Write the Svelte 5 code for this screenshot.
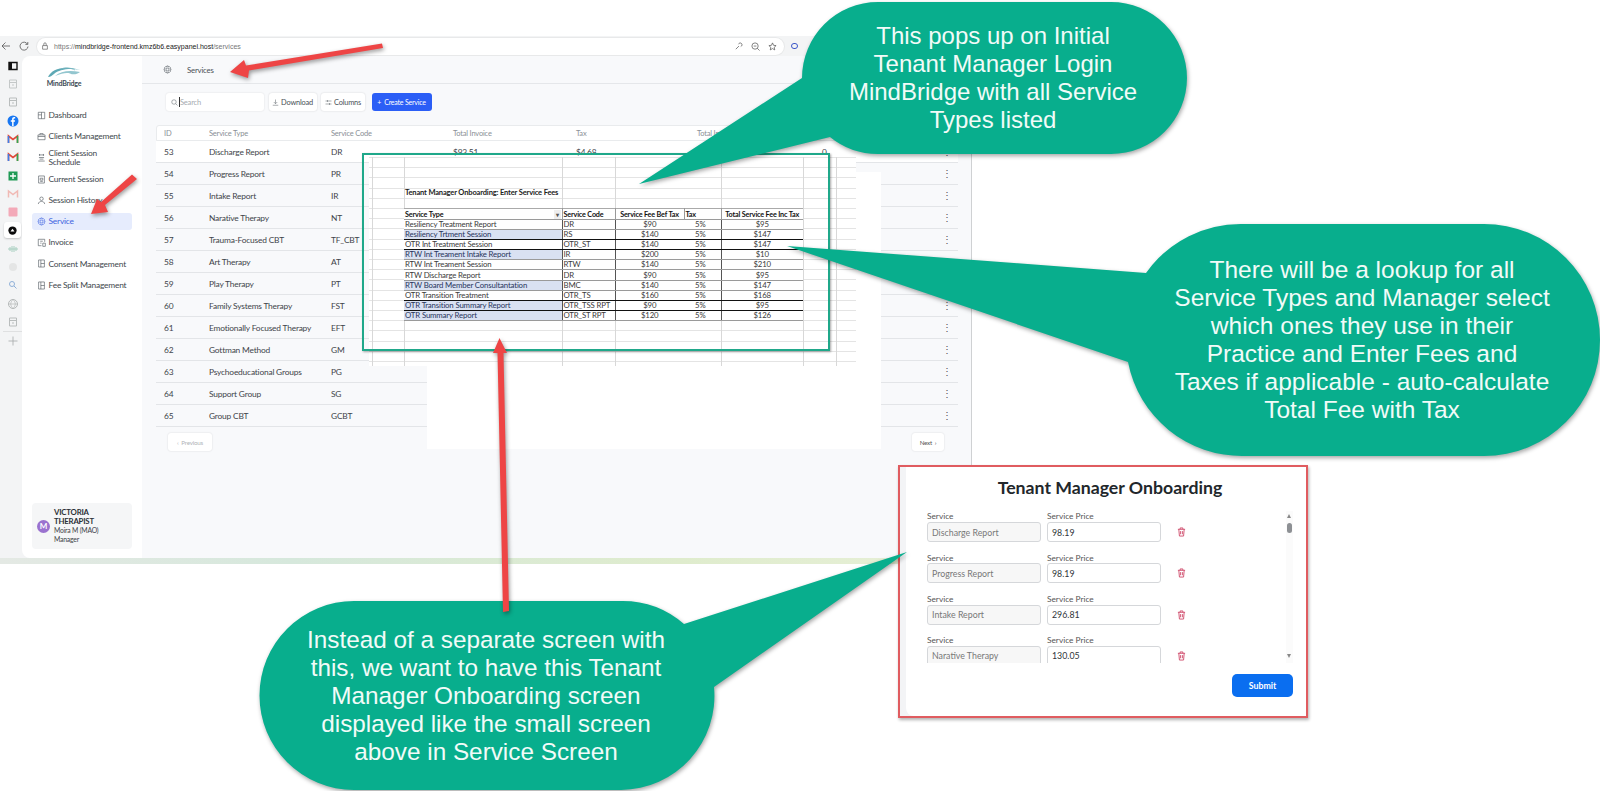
<script>
  const navItems = [
    { label: "Dashboard", icon: "dash" },
    { label: "Clients Management", icon: "case" },
    { label: "Client Session Schedule", icon: "cal" },
    { label: "Current Session", icon: "doc" },
    { label: "Session History", icon: "user" },
    { label: "Service", icon: "gear", active: true },
    { label: "Invoice", icon: "inv" },
    { label: "Consent Management", icon: "book" },
    { label: "Fee Split Management", icon: "book" }
  ];

  const services = [
    [53, "Discharge Report", "DR"],
    [54, "Progress Report", "PR"],
    [55, "Intake Report", "IR"],
    [56, "Narative Therapy", "NT"],
    [57, "Trauma-Focused CBT", "TF_CBT"],
    [58, "Art Therapy", "AT"],
    [59, "Play Therapy", "PT"],
    [60, "Family Systems Therapy", "FST"],
    [61, "Emotionally Focused Therapy", "EFT"],
    [62, "Gottman Method", "GM"],
    [63, "Psychoeducational Groups", "PG"],
    [64, "Support Group", "SG"],
    [65, "Group CBT", "GCBT"]
  ];

  const fees = [
    ["Resiliency Treatment Report", "DR", "$90", "$95", false, false],
    ["Resiliency Trtment Session", "RS", "$140", "$147", true, true],
    ["OTR Int Treatment Session", "OTR_ST", "$140", "$147", false, true],
    ["RTW Int Treament Intake Report", "IR", "$200", "$10", true, false],
    ["RTW Int Treament Session", "RTW", "$140", "$210", false, false],
    ["RTW Discharge Report", "DR", "$90", "$95", false, false],
    ["RTW Board Member Consultantation", "BMC", "$140", "$147", true, false],
    ["OTR Transition Treatment", "OTR_TS", "$160", "$168", false, true],
    ["OTR Transition Summary Report", "OTR_TSS RPT", "$90", "$95", true, true],
    ["OTR Summary Report", "OTR_ST RPT", "$120", "$126", true, false]
  ];

  const prices = [
    ["Discharge Report", "98.19"],
    ["Progress Report", "98.19"],
    ["Intake Report", "296.81"],
    ["Narative Therapy", "130.05"]
  ];

  const gridCols = [3, 35, 193, 246, 352, 434, 467];

  const icons = {
    dash: "M2 2h10v10H2zM7 2v10M2 6h5",
    case: "M1.5 4.5h11v7.5h-11zM4.5 4.5V2.5h5v2M1.5 7h11",
    cal: "M3 3h8M4 1.5v3M10 1.5v3M3 7h8M2 12.5h10M4 9.5h6",
    doc: "M2.5 1.5h9v11h-9zM5 5h4v3H5zM5 10h4",
    user: "M7 7a2.7 2.7 0 1 0 0-5.4A2.7 2.7 0 0 0 7 7zM2 12.5c.5-3 2.5-4 5-4s4.500 1 5 4",
    gear: "M7 4.800a2.200 2.200 0 1 0 0 4.400 2.200 2.200 0 0 0 0-4.400zM6 1.500h2l.4 1.700 1.600-.7 1.400 1.400-.8 1.500 1.700.6v2l-1.700.5.8 1.600-1.400 1.400-1.600-.8-.4 1.800H6l-.5-1.800-1.500.8-1.400-1.400.8-1.600-1.700-.5v-2l1.700-.6-.8-1.500L4 2.500l1.500.7z",
    inv: "M2 2h10v4M2 2v10h5M9 8h4v5H9zM5 5h4M5 8h2",
    book: "M2.500 1.500h9v11h-9zM6 1.500v11M6 7h5.500"
  };
</script>

{#snippet icon(name, size = 9)}
  <svg class="ico" viewBox="0 0 14 14" width={size} height={size}><path d={icons[name]} /></svg>
{/snippet}

<div class="page">
  <div class="shot">
    <div class="addr">
      <svg class="chrome-ico" width="10" height="10" viewBox="0 0 10 10"><path d="M9 5H1M4.500 1.500 1 5l3.500 3.500" /></svg>
      <svg class="chrome-ico reload" width="10" height="10" viewBox="0 0 10 10"><path d="M8.500 3.200A4 4 0 1 0 9 5.500M8.800 1v2.400H6.400" /></svg>
      <div class="pill">
        <svg class="chrome-ico lock" width="8" height="8" viewBox="0 0 10 10"><path d="M2 4.500h6v4.500H2zM3.500 4.500V2.500a1.500 1.500 0 0 1 3 0v2" /></svg>
        <span class="url">https://<b>mindbridge-frontend.kmz6b6.easypanel.host</b>/services</span>
        <svg class="chrome-ico end" width="9" height="9" viewBox="0 0 10 10"><path d="M2 8l3.500-3.500M5 2.500a2 2 0 1 1 2.500 2.500" /></svg>
        <svg class="chrome-ico" width="9" height="9" viewBox="0 0 10 10"><path d="M4.500 1a3.500 3.500 0 1 0 0 7 3.500 3.500 0 0 0 0-7zM7 7l2.500 2.500M3 4.500h3" /></svg>
        <svg class="chrome-ico" width="9" height="9" viewBox="0 0 10 10"><path d="M5 1l1.200 2.700 2.800.3-2.100 1.900.6 2.900L5 7.300 2.500 8.800l.6-2.900L1 4l2.800-.3z" /></svg>
      </div>
      <span class="ring"></span>
    </div>

    <div class="app">
      <aside class="rail">
        <svg class="r" viewBox="0 0 12 12"><path d="M2 2.500h8v7H2z" fill="none" stroke="#111" stroke-width="1.400" /><path d="M2 2.500h3v7H2z" fill="#111" /></svg>
        <svg class="r" viewBox="0 0 12 12"><path d="M2.500 2h7v8h-7zM2.500 4.500h7M5 7h2" fill="none" stroke="#c4c8c8" /></svg>
        <svg class="r" viewBox="0 0 12 12"><path d="M2.500 2h7v8h-7zM2.500 4.500h7M5 7h2" fill="none" stroke="#b9bdbd" /></svg>
        <svg class="r" viewBox="0 0 12 12"><circle cx="6" cy="6" r="5.500" fill="#1877f2" /><path d="M6.600 11V6.800h1.300l.2-1.500H6.600v-1c0-.5.200-.8.800-.8h.8V2.200c-.3 0-.7-.1-1.100-.1-1.200 0-2 .7-2 2v1.200H3.800v1.500h1.300V11z" fill="#fff" /></svg>
        <svg class="r" viewBox="0 0 12 12"><path d="M1.500 10V3l4.500 3.500L10.500 3v7" fill="none" stroke="#e2483a" stroke-width="1.600" /><path d="M1.500 10V3" stroke="#3f7fe8" stroke-width="1.600" /><path d="M10.500 10V3" stroke="#2fa952" stroke-width="1.600" /></svg>
        <svg class="r" viewBox="0 0 12 12"><path d="M1.500 10V3l4.500 3.500L10.500 3v7" fill="none" stroke="#e2483a" stroke-width="1.600" /><path d="M1.500 10V3" stroke="#3f7fe8" stroke-width="1.600" /><path d="M10.500 10V3" stroke="#2fa952" stroke-width="1.600" /></svg>
        <svg class="r" viewBox="0 0 12 12"><rect x="1.500" y="1.500" width="9" height="9" fill="#1f9a55" /><path d="M6 3v6M3 6h6" stroke="#fff" stroke-width="1.300" /></svg>
        <svg class="r" viewBox="0 0 12 12"><path d="M1.500 9.500V3l4.500 3.500L10.500 3v6.500" fill="none" stroke="#f0b9b4" stroke-width="1.500" /></svg>
        <svg class="r" viewBox="0 0 12 12"><rect x="1.500" y="1.500" width="9" height="9" rx="1" fill="#f3a9b8" /></svg>
        <span class="r-on"><svg viewBox="0 0 12 12" width="11" height="11"><circle cx="6" cy="6" r="4.500" fill="#0c0c0c" /><path d="M3.800 7 6 4.200 8.200 7z" fill="#fff" /></svg></span>
        <svg class="r" viewBox="0 0 12 12"><path d="M1 6h10M3 4v4M5 3v6M7 3v6M9 4v4" stroke="#a8cfc0" /></svg>
        <svg class="r" viewBox="0 0 12 12"><circle cx="6" cy="6" r="4" fill="#e4e5e5" /></svg>
        <svg class="r" viewBox="0 0 12 12"><path d="M5 2.500a2.500 2.500 0 1 0 0 5 2.500 2.500 0 0 0 0-5zM7 7l2.500 2.500" fill="none" stroke="#8fb0d8" /></svg>
        <svg class="r" viewBox="0 0 12 12"><circle cx="6" cy="6" r="4.500" fill="none" stroke="#b4b8b8" /><path d="M1.500 6h9M6 1.500c-3 3-3 6 0 9M6 1.500c3 3 3 6 0 9" fill="none" stroke="#b4b8b8" stroke-width=".7" /></svg>
        <svg class="r" viewBox="0 0 12 12"><path d="M2.500 2h7v8h-7zM2.500 4.500h7M5 7h2" fill="none" stroke="#b9bdbd" /></svg>
        <span class="r-sep"></span>
        <svg class="r plus" viewBox="0 0 12 12"><path d="M6 1.500v9M1.500 6h9" fill="none" stroke="#a5a9a9" stroke-width=".8" /></svg>
      </aside>

      <aside class="side">
        <div class="logo">
          <svg width="34" height="12" viewBox="0 0 34 12">
            <path d="M1 11C5 3 16-1 33 4 24 2 12 3 7 8c-2 1.500-3 3-6 3z" fill="#5ea9b5" />
            <path d="M8 10c6-5 14-6 25-4-3 2.500-7 3-10 1.500-4-1-8 0-15 2.500z" fill="#93c6cf" />
            <path d="M14 3c5-2 10-1 14 1" fill="none" stroke="#7db9c3" stroke-width=".8" />
          </svg>
          <span>MindBridge</span>
        </div>
        <nav>
          {#each navItems as item}
            <div class="nav-item" class:active={item.active}>
              {@render icon(item.icon)}
              <span class="nav-label">{item.label}</span>
            </div>
          {/each}
        </nav>
        <div class="user">
          <span class="avatar">M</span>
          <div class="who">
            <strong>VICTORIA THERAPIST</strong>
            <small>Moira M (MAO)</small>
            <small>Manager</small>
          </div>
        </div>
      </aside>

      <main>
        <header class="top">
          {@render icon("gear")}
          <span>Services</span>
        </header>
        <div class="tools">
          <div class="search">
            <svg class="ico" width="7" height="7" viewBox="0 0 14 14"><path d="M6 1.500a4.500 4.500 0 1 0 0 9 4.500 4.500 0 0 0 0-9zM9.500 9.500 13 13" /></svg>
            <i></i>Search
          </div>
          <button class="btn dl">
            <svg class="ico" width="7" height="7" viewBox="0 0 14 14"><path d="M7 1v8M3.500 6 7 9.500 10.500 6M1.500 12.500h11" /></svg>
            Download
          </button>
          <button class="btn col">
            <svg class="ico" width="7" height="7" viewBox="0 0 14 14"><path d="M1 4h12M1 10h12M5 2v4M9 8v4" /></svg>
            Columns
          </button>
          <button class="btn create">+&nbsp; Create Service</button>
        </div>
        <section class="table">
          <div class="row head">
            <span>ID</span><span>Service Type</span><span>Service Code</span><span>Total Invoice</span><span>Tax</span><span>Total Income</span><span>(A</span><span></span>
          </div>
          {#each services as s, n}
            <div class="row" class:first={n === 0}>
              <span>{s[0]}</span><span>{s[1]}</span><span>{s[2]}</span>
              <span>{n === 0 ? "$93.51" : ""}</span><span>{n === 0 ? "$4.68" : ""}</span><span></span>
              <span>{n === 0 ? "0" : ""}</span>
              <span class="dots">⋮</span>
            </div>
          {/each}
        </section>
        <div class="pager">
          <button class="btn pg prev">‹&nbsp; Previous</button>
          <button class="btn pg next">Next &nbsp;›</button>
        </div>
      </main>
    </div>
    <div class="strip"></div>
  </div>

  <div class="white-block"></div>
  <div class="sheet">
    {#each gridCols as c}
      <span class="vline" style="left:{c}px"></span>
    {/each}
    <div class="sheet-title">Tenant Manager Onboarding: Enter Service Fees</div>
    <table>
      <colgroup><col class="c1" /><col class="c2" /><col class="c3" /><col class="c4" /><col class="c5" /></colgroup>
      <thead>
        <tr><th class="l">Service Type <em>▾</em></th><th class="l">Service Code</th><th>Service Fee Bef Tax</th><th class="l">Tax</th><th>Total Service Fee Inc Tax</th></tr>
      </thead>
      <tbody>
        {#each fees as f}
          <tr class:dark={f[5]}>
            <td class="l" class:blue={f[4]}>{f[0]}</td>
            <td class="l">{f[1]}</td>
            <td class="open">{f[2]}</td>
            <td class="tax">5%</td>
            <td class="open">{f[3]}</td>
          </tr>
        {/each}
      </tbody>
    </table>
  </div>
  <div class="teal-box"></div>

  <section class="onboard">
    <div class="card">
      <h2>Tenant Manager Onboarding</h2>
      <div class="list">
        {#each prices as p}
          <div class="field">
            <div class="labels"><span>Service</span><span>Service Price</span></div>
            <div class="inputs">
              <div class="input off">{p[0]}</div>
              <div class="input">{p[1]}</div>
              <svg class="trash" width="9" height="10" viewBox="0 0 10 11"><path d="M1 2.500h8M3.500 2.500V1h3v1.500M2 2.500l.7 7.500h4.600L8 2.500M4 4.500v3.500M6 4.500v3.500" /></svg>
            </div>
          </div>
        {/each}
        <div class="scrollbar">
          <span class="up"></span>
          <span class="thumb"></span>
          <span class="down"></span>
        </div>
      </div>
      <div class="foot"><button class="submit">Submit</button></div>
    </div>
  </section>

  <svg class="marks" width="1600" height="791" viewBox="0 0 1600 791">
    <g class="bubble">
      <path d="M878 2H1111A76 76 0 0 1 1111 154H878A76 76 0 0 1 830 137L639 184 802 78A76 76 0 0 1 878 2Z" />
      <path d="M1244 224H1484A116 116 0 0 1 1484 456H1244A116 116 0 0 1 1128 362L787 246 1146 273A116 116 0 0 1 1244 224Z" />
      <path d="M354 601H621A94 94 0 0 1 684 624L907 552 714 687A94 94 0 0 1 621 790H354A94 94 0 0 1 354 601Z" />
    </g>
    <g class="arrow">
      <path d="M382 43.500 383 48 249 70.500 248 78 230 72 244 60 246 65.500Z" />
      <path d="M132 174.500 137 179 105 205 108 212 91 214 97 199 101 202Z" />
      <path d="M499.500 338 507 353 503.500 353 509 611 503 612 497.500 353 493 353Z" />
    </g>
  </svg>

  <div class="say say1">This pops up on Initial<br />Tenant Manager Login<br />MindBridge with all Service<br />Types listed</div>
  <div class="say say2">There will be a lookup for all<br />Service Types and Manager select<br />which ones they use in their<br />Practice and Enter Fees and<br />Taxes if applicable - auto-calculate<br />Total Fee with Tax</div>
  <div class="say say3">Instead of a separate screen with<br />this, we want to have this Tenant<br />Manager Onboarding screen<br />displayed like the small screen<br />above in Service Screen</div>
</div>

<style>
  :global(body) {
    margin: 0;
    background: #fff;
  }
  .page {
    position: relative;
    width: 1600px;
    height: 791px;
    overflow: hidden;
    background: #fff;
    font-family: "Lato", "Liberation Sans", sans-serif;
    color: #3c4248;
  }
  .shot {
    width: 972px;
    padding-top: 36px;
  }
  .addr {
    height: 20px;
    background: #f3f4f5;
    display: flex;
    align-items: center;
    padding-left: 1px;
  }
  .chrome-ico {
    fill: none;
    stroke: #555;
    stroke-width: 0.8;
    flex: none;
  }
  .reload {
    margin-left: 8px;
  }
  .pill {
    margin-left: 8px;
    width: 747px;
    height: 17px;
    background: #fff;
    border-radius: 9px;
    box-shadow: 0 0 0 1px #e8e9ea;
    display: flex;
    align-items: center;
    gap: 8px;
    padding: 0 7px 0 4px;
    box-sizing: border-box;
  }
  .lock {
    margin-right: -3px;
  }
  .url {
    font-family: "Liberation Sans", sans-serif;
    font-size: 7px;
    color: #777;
    white-space: nowrap;
  }
  .url b {
    font-weight: 400;
    color: #222;
  }
  .end {
    margin-left: auto;
  }
  .ring {
    width: 5px;
    height: 4px;
    border: 1.5px solid #3a55c8;
    border-radius: 3px;
    margin-left: 7px;
  }
  .app {
    display: flex;
    height: 502px;
    background: #f3f4f5;
  }
  .rail {
    width: 22px;
    flex: none;
    display: flex;
    flex-direction: column;
    align-items: center;
    padding-top: 0.5px;
  }
  .r {
    width: 12px;
    height: 12px;
    flex: none;
    margin: 3.165px 0;
    margin-left: 3px;
  }
  .r-on {
    width: 17px;
    height: 16px;
    margin: 1.165px 0 1.165px 3px;
    background: #fff;
    border-radius: 3px;
    box-shadow: 0 1px 2px rgba(0, 0, 0, 0.2);
    display: flex;
    align-items: center;
    justify-content: center;
    flex: none;
  }
  .r-sep {
    width: 20px;
    height: 1px;
    background: #dfe0e1;
    margin: 0 0 0 3px;
  }
  .plus {
    margin-top: 3px;
  }
  .side {
    width: 120px;
    flex: none;
    background: #fff;
    border-radius: 8px 0 0 8px;
    display: flex;
    flex-direction: column;
    padding: 0 10px 9px;
    box-sizing: border-box;
    letter-spacing: -0.2px;
  }
  .logo {
    height: 51px;
    display: flex;
    flex-direction: column;
    align-items: center;
    width: 46px;
    margin-left: 9px;
    padding-top: 10px;
    box-sizing: border-box;
  }
  .logo span {
    font-size: 7px;
    font-weight: 700;
    color: #3c4a55;
    margin-top: 1px;
  }
  nav {
    display: flex;
    flex-direction: column;
    gap: 4.200px;
  }
  .nav-item {
    height: 17px;
    display: flex;
    align-items: center;
    gap: 2.500px;
    padding-left: 5px;
    font-size: 8.400px;
    line-height: 8.400px;
    border-radius: 3px;
    color: #41474d;
  }
  .nav-label {
    max-width: 80px;
  }
  .nav-item.active {
    background: #e6ecfd;
    color: #3d63e0;
  }
  .nav-item.active :global(.ico) {
    stroke: #3d63e0;
  }
  .ico {
    fill: none;
    stroke: #555c62;
    stroke-width: 1;
    flex: none;
  }
  .user {
    margin-top: auto;
    height: 46px;
    background: #f5f6f7;
    border-radius: 4px;
    display: flex;
    align-items: center;
    gap: 4px;
    padding-left: 5px;
  }
  .who {
    width: 66px;
  }
  .avatar {
    width: 13px;
    height: 13px;
    border-radius: 50%;
    background: #9a72cf;
    color: #fff;
    font-size: 8px;
    font-weight: 700;
    display: flex;
    align-items: center;
    justify-content: center;
    flex: none;
  }
  .user strong {
    display: block;
    width: 50px;
    font-size: 7.800px;
    line-height: 9.200px;
    font-weight: 700;
    color: #2c3136;
  }
  .user small {
    display: block;
    font-size: 6.800px;
    line-height: 9.200px;
  }
  main {
    flex: 1;
    background: #f8f9fb;
    border-right: 1px solid #cfd1d3;
    min-width: 0;
    letter-spacing: -0.2px;
  }
  .top {
    height: 27px;
    border-bottom: 1px solid #e5e7ea;
    display: flex;
    align-items: center;
    gap: 15px;
    padding-left: 21px;
    font-size: 7.800px;
    color: #4a5056;
  }
  .tools {
    display: flex;
    gap: 4.500px;
    padding: 9px 0 0 24px;
    height: 18px;
  }
  .search {
    width: 98px;
    box-sizing: border-box;
    background: #fff;
    border-radius: 3px;
    box-shadow: 0 0 2px rgba(0, 0, 0, 0.12);
    display: flex;
    align-items: center;
    padding-left: 5px;
    font-size: 7.500px;
    color: #a6abb0;
  }
  .search i {
    width: 1px;
    height: 10px;
    background: #333;
    margin: 0 0 0 1px;
  }
  .btn {
    font-family: inherit;
    letter-spacing: inherit;
    border: 0;
    background: #fff;
    border-radius: 3px;
    box-shadow: 0 0 2px rgba(0, 0, 0, 0.16);
    font-size: 7.400px;
    color: #4a5056;
    padding: 0;
    height: 18px;
    display: flex;
    align-items: center;
    justify-content: center;
    gap: 2px;
  }
  .dl {
    width: 48px;
  }
  .col {
    width: 44px;
  }
  .create {
    width: 60px;
    margin-left: 2px;
    background: #2b5ef6;
    color: #fff;
    box-shadow: none;
    font-size: 7px;
  }
  .table {
    margin: 14px 13px 0 14px;
  }
  .row {
    display: grid;
    grid-template-columns: 45px 122px 122px 123px 121px 125px 120px 16px;
    padding-left: 8px;
    height: 22px;
    align-items: center;
    border-bottom: 1px solid #e3e5e8;
    box-sizing: border-box;
    font-size: 8.400px;
    color: #3e444a;
    white-space: nowrap;
  }
  .head {
    height: 16px;
    background: #fff;
    border: 1px solid #e9ebed;
    border-radius: 3px 3px 0 0;
    padding-left: 7px;
    font-size: 7.500px;
    color: #8a9096;
  }
  .first {
    background: #fff;
  }
  .dots {
    font-size: 10px;
    font-family: "Liberation Sans", sans-serif;
    color: #555;
  }
  .pager {
    display: flex;
    justify-content: space-between;
    margin: 6px 27px 0 26px;
  }
  .pg {
    height: 18px;
    font-size: 6.200px;
    box-shadow: 0 0 2px rgba(0, 0, 0, 0.14);
  }
  .prev {
    width: 44px;
    color: #b0b4b8;
  }
  .next {
    width: 32px;
    color: #555;
  }
  .strip {
    height: 6px;
    background: linear-gradient(90deg, #e4e9e4, #d6e8dc 30%, #dfeccd 70%, #e8f0d8);
  }
  .white-block {
    position: absolute;
    left: 427px;
    top: 172px;
    width: 454px;
    height: 277px;
    background: #fff;
  }
  .sheet {
    position: absolute;
    left: 369px;
    top: 157px;
    width: 487px;
    height: 209px;
    background-color: #fff;
    background-image: repeating-linear-gradient(#e4e4e4 0 1px, transparent 1px 10.200px);
  }
  .vline {
    position: absolute;
    top: 0;
    bottom: 0;
    width: 1px;
    background: #d8d8d8;
  }
  .sheet-title {
    position: absolute;
    left: 36px;
    top: 31px;
    font-size: 7.500px;
    line-height: 10px;
    letter-spacing: -0.15px;
    font-weight: 700;
    color: #222;
    white-space: nowrap;
  }
  table {
    position: absolute;
    left: 35px;
    top: 51px;
    width: 399px;
    border-collapse: collapse;
    table-layout: fixed;
    background: #fff;
    font-size: 7.800px;
    letter-spacing: -0.15px;
    color: #3a3a3a;
  }
  .c1 { width: 158px; }
  .c2 { width: 53px; }
  .c3 { width: 69px; }
  .c4 { width: 37px; }
  .c5 { width: 82px; }
  th, td {
    height: 10.100px;
    padding: 0 1px;
    line-height: 9px;
    font-weight: 400;
    text-align: center;
    white-space: nowrap;
    box-sizing: border-box;
    border-bottom: 1px solid #9a9a9a;
    border-right: 1px solid #555;
  }
  th {
    height: 11px;
    font-weight: 700;
    font-size: 7.200px;
    color: #111;
    border-top: 1px solid #aaa;
    border-right: 1px solid #999;
  }
  th:last-child, td:last-child {
    border-right: 0;
  }
  th em {
    float: right;
    font-style: normal;
    font-size: 6px;
    color: #555;
    background: #eee;
    padding: 0 2px;
  }
  .l {
    text-align: left;
  }
  td.open {
    border-right: 0;
  }
  td.tax {
    text-align: right;
    padding-right: 15px;
  }
  tr.dark td {
    border-bottom-color: #111;
  }
  .blue {
    background: #d9e1f2;
    color: #27345c;
  }
  .teal-box {
    position: absolute;
    left: 362px;
    top: 152.500px;
    width: 468px;
    height: 198px;
    box-sizing: border-box;
    border: 2.500px solid #1fa88a;
    box-shadow: 1px 1px 2px rgba(0, 0, 0, 0.35);
  }
  .onboard {
    position: absolute;
    left: 898px;
    top: 465px;
    width: 410px;
    height: 253px;
    box-sizing: border-box;
    border: 2px solid #e05c60;
    box-shadow: 1px 2px 3px rgba(0, 0, 0, 0.3);
    background: #f3f4f6;
    padding-left: 6px;
  }
  .card {
    background: #fff;
    height: 100%;
    border-radius: 0 0 0 8px;
    padding: 10px 13px 0 21px;
    box-sizing: border-box;
    font-family: "Lato", "Liberation Sans", sans-serif;
  }
  h2 {
    margin: 0 0 12px;
    text-align: center;
    font-size: 17.700px;
    line-height: 22px;
    font-weight: 700;
    color: #22272b;
  }
  .list {
    position: relative;
    height: 152px;
    overflow: hidden;
  }
  .field {
    height: 41.300px;
  }
  .labels, .inputs {
    display: flex;
    align-items: center;
    gap: 6px;
  }
  .labels {
    height: 11px;
    font-size: 8.300px;
    line-height: 8.300px;
    color: #555;
  }
  .labels span {
    width: 114px;
  }
  .input {
    width: 114px;
    height: 20px;
    box-sizing: border-box;
    border: 1px solid #d5d7da;
    border-radius: 3px;
    background: #fff;
    font-size: 8.800px;
    display: flex;
    align-items: center;
    padding-left: 4px;
    color: #30353a;
  }
  .off {
    background: #f7f7f7;
    color: #777;
  }
  .trash {
    fill: none;
    stroke: #cf4a6a;
    stroke-width: 1;
    margin-left: 10px;
  }
  .scrollbar {
    position: absolute;
    right: 0;
    top: 0;
    bottom: 0;
    width: 7px;
    background: #fbfbfb;
  }
  .scrollbar span {
    position: absolute;
    left: 1px;
  }
  .thumb {
    top: 12px;
    width: 5px;
    height: 10px;
    border-radius: 3px;
    background: #8d9094;
  }
  .up, .down {
    width: 0;
    height: 0;
    border-left: 2.500px solid transparent;
    border-right: 2.500px solid transparent;
  }
  .up {
    top: 3px;
    border-bottom: 4px solid #888;
  }
  .down {
    bottom: 5px;
    border-top: 4px solid #888;
  }
  .foot {
    display: flex;
    justify-content: flex-end;
    margin-top: 11px;
  }
  .submit {
    width: 61px;
    height: 23px;
    border: 0;
    border-radius: 5px;
    background: #0a6ef0;
    color: #fff;
    font-family: inherit;
    font-weight: 700;
    font-size: 8.800px;
  }
  .marks {
    position: absolute;
    left: 0;
    top: 0;
    pointer-events: none;
  }
  .bubble path {
    fill: #08ae8d;
    filter: drop-shadow(1px 2px 2px rgba(0, 0, 0, 0.35));
  }
  .arrow path {
    fill: #ee4545;
    filter: drop-shadow(1px 2px 2px rgba(0, 0, 0, 0.4));
  }
  .say {
    position: absolute;
    font-family: "Liberation Sans", Arial, sans-serif;
    font-size: 24px;
    line-height: 28px;
    text-align: center;
    color: #f1fbf8;
    white-space: nowrap;
    transform: translateX(-50%);
  }
  .say1 {
    left: 993px;
    top: 22px;
  }
  .say2 {
    left: 1362px;
    top: 256px;
    font-size: 24.500px;
  }
  .say3 {
    left: 486px;
    top: 626px;
    font-size: 24.300px;
  }
</style>
